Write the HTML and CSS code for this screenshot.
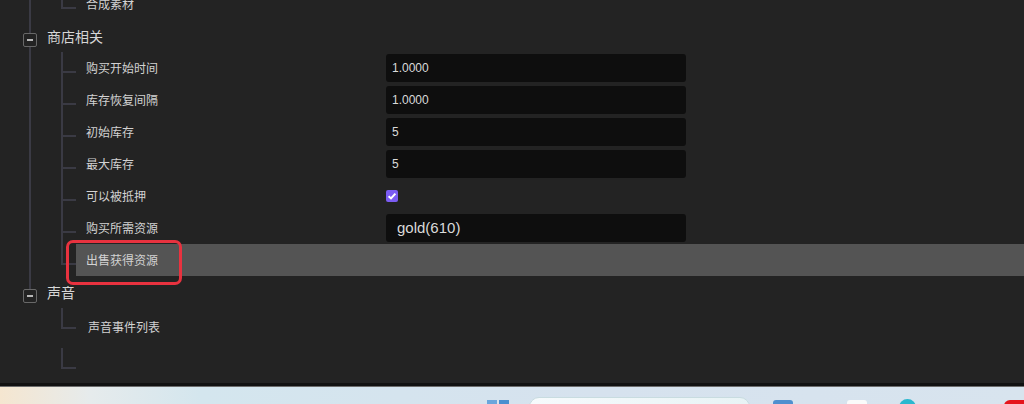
FILE: index.html
```html
<!DOCTYPE html>
<html lang="zh-CN">
<head>
    <meta charset="UTF-8">
    <title>属性面板</title>
    <link rel="stylesheet" href="styles.css">
</head>
<body>
    <div class="tree">
        <div class="group cut">
            <ul class="children">
                <li class="row"><div class="cell"><span class="label">合成素材</span></div></li>
            </ul>
        </div>

        <div class="group">
            <div class="node"><span class="toggle"></span><span class="title">商店相关</span></div>
            <ul class="children linked">
                <li class="row"><div class="cell"><span class="label">购买开始时间</span><span class="field">1.0000</span></div></li>
                <li class="row"><div class="cell"><span class="label">库存恢复间隔</span><span class="field">1.0000</span></div></li>
                <li class="row"><div class="cell"><span class="label">初始库存</span><span class="field">5</span></div></li>
                <li class="row"><div class="cell"><span class="label">最大库存</span><span class="field">5</span></div></li>
                <li class="row"><div class="cell"><span class="label">可以被抵押</span>
                    <span class="check"><svg width="12" height="12" viewBox="0 0 12 12"><path d="M2.6 6.2 L5 8.4 L9.4 3.6" fill="none" stroke="#fff" stroke-width="2"/></svg></span>
                </div></li>
                <li class="row"><div class="cell"><span class="label">购买所需资源</span><span class="field big">gold(610)</span></div></li>
                <li class="row selected">
                    <div class="cell"><span class="label">出售获得资源</span></div>
                    <span class="mark"></span>
                </li>
            </ul>
        </div>

        <div class="group last">
            <div class="node"><span class="toggle"></span><span class="title">声音</span></div>
            <ul class="children loose">
                <li class="row"><div class="cell"><span class="label">声音事件列表</span></div></li>
                <li class="row"><div class="cell"></div></li>
            </ul>
        </div>
    </div>
    <div class="edge"></div>
    <div class="taskbar">
        <span class="tb-icon"></span>
        <span class="tb-search"></span>
        <span class="tb-app"></span>
        <span class="tb-app light"></span>
        <span class="tb-dot"></span>
        <span class="tb-red"></span>
    </div>
</body>
</html>
```

FILE: styles.css
```css
body {
    margin: 0;
    padding: 0;
    width: 1024px;
    height: 404px;
    overflow: hidden;
    background-color: #232323;
    font-family: "Noto Sans CJK SC", "Liberation Sans", sans-serif;
    color: #d2d2d2;
}
.tree {
    height: 383px;
    overflow: hidden;
    padding-left: 23px;
    box-sizing: border-box;
}
.group {
    position: relative;
}
.group::after {
    content: "";
    position: absolute;
    left: 6px;
    top: 27px;
    bottom: -13px;
    width: 2px;
    background-color: #3a3a44;
}
.group.cut::after {
    top: 0;
}
.group.last::after {
    display: none;
}
.node {
    display: flex;
    align-items: flex-start;
    height: 32px;
}
.toggle {
    position: relative;
    width: 14px;
    height: 14px;
    margin-top: 13px;
    border: 1px solid #686868;
    border-radius: 2px;
    box-sizing: border-box;
}
.toggle::after {
    content: "";
    position: absolute;
    left: 3px;
    top: 5px;
    width: 6px;
    height: 2px;
    background-color: #b8b8b8;
}
.title {
    margin: 6px 0 0 10px;
    font-size: 14px;
    line-height: 20px;
    color: #d6d6d6;
}
.children {
    list-style: none;
    margin: 0 0 0 38px;
    padding: 0;
}
.group.cut .children {
    margin-top: -12px;
}
.row {
    position: relative;
    padding-left: 15px;
}
.row::before {
    content: "";
    position: absolute;
    left: 0;
    top: 0;
    width: 13px;
    height: 19px;
    border-left: 2px solid #3a3a44;
    border-bottom: 2px solid #3a3a44;
}
.linked .row:not(:last-child)::after {
    content: "";
    position: absolute;
    left: 0;
    top: 21px;
    bottom: 0;
    width: 2px;
    background-color: #3a3a44;
}
.cell {
    display: flex;
    align-items: center;
    height: 32px;
}
.label {
    width: 300px;
    padding-left: 10px;
    font-size: 12px;
    line-height: 18px;
}
.loose .cell {
    height: 40px;
    align-items: flex-start;
    padding-top: 10px;
    box-sizing: border-box;
}
.loose .label {
    padding-left: 12px;
}
.field {
    width: 300px;
    height: 28px;
    padding-left: 6px;
    box-sizing: border-box;
    background-color: #0e0e0e;
    border-radius: 3px;
    font-family: "Liberation Sans", sans-serif;
    font-size: 12px;
    line-height: 28px;
    color: #dadada;
}
.field.big {
    padding-left: 11px;
    font-size: 15px;
}
.check {
    width: 12px;
    height: 12px;
    border-radius: 2px;
    background-color: #7b5cf3;
}
.check svg {
    display: block;
}
.selected .cell {
    background-color: #545454;
}
.mark {
    position: absolute;
    left: 5px;
    top: -4px;
    width: 116px;
    height: 45px;
    border: 3px solid #e8323f;
    border-radius: 7px;
    box-sizing: border-box;
}
.edge {
    height: 3px;
    background-color: #111;
    border-bottom: 1px solid #6c6c6c;
}
.taskbar {
    display: flex;
    align-items: flex-start;
    height: 17px;
    overflow: hidden;
    background: linear-gradient(90deg, #f5e6d0 0, #e6ebec 90px, #d4e6ee 200px, #d6e2ee 600px, #d8e4ee 100%);
}
.tb-icon {
    width: 22px;
    height: 4px;
    margin: 13px 0 0 487px;
    background: linear-gradient(90deg, #6aa6dc 0, #6aa6dc 45%, transparent 45%, transparent 55%, #4a8fd0 55%);
}
.tb-search {
    width: 221px;
    height: 20px;
    margin: 10px 0 0 20px;
    border-radius: 10px;
    background: linear-gradient(90deg, #f6fafc, #e8f3f5);
    border: 1px solid #c8dce0;
}
.tb-app {
    width: 20px;
    height: 6px;
    margin: 13px 0 0 23px;
    border-radius: 3px 3px 0 0;
    background-color: #4f8fcf;
}
.tb-app.light {
    margin-left: 54px;
    background-color: #fafafa;
}
.tb-dot {
    width: 17px;
    height: 17px;
    margin: 12px 0 0 32px;
    border-radius: 50%;
    background-color: #2bb8cf;
}
.tb-red {
    width: 20px;
    height: 10px;
    margin: 13px 0 0 88px;
    border-radius: 6px 0 0 0;
    background-color: #e5151c;
}
```
